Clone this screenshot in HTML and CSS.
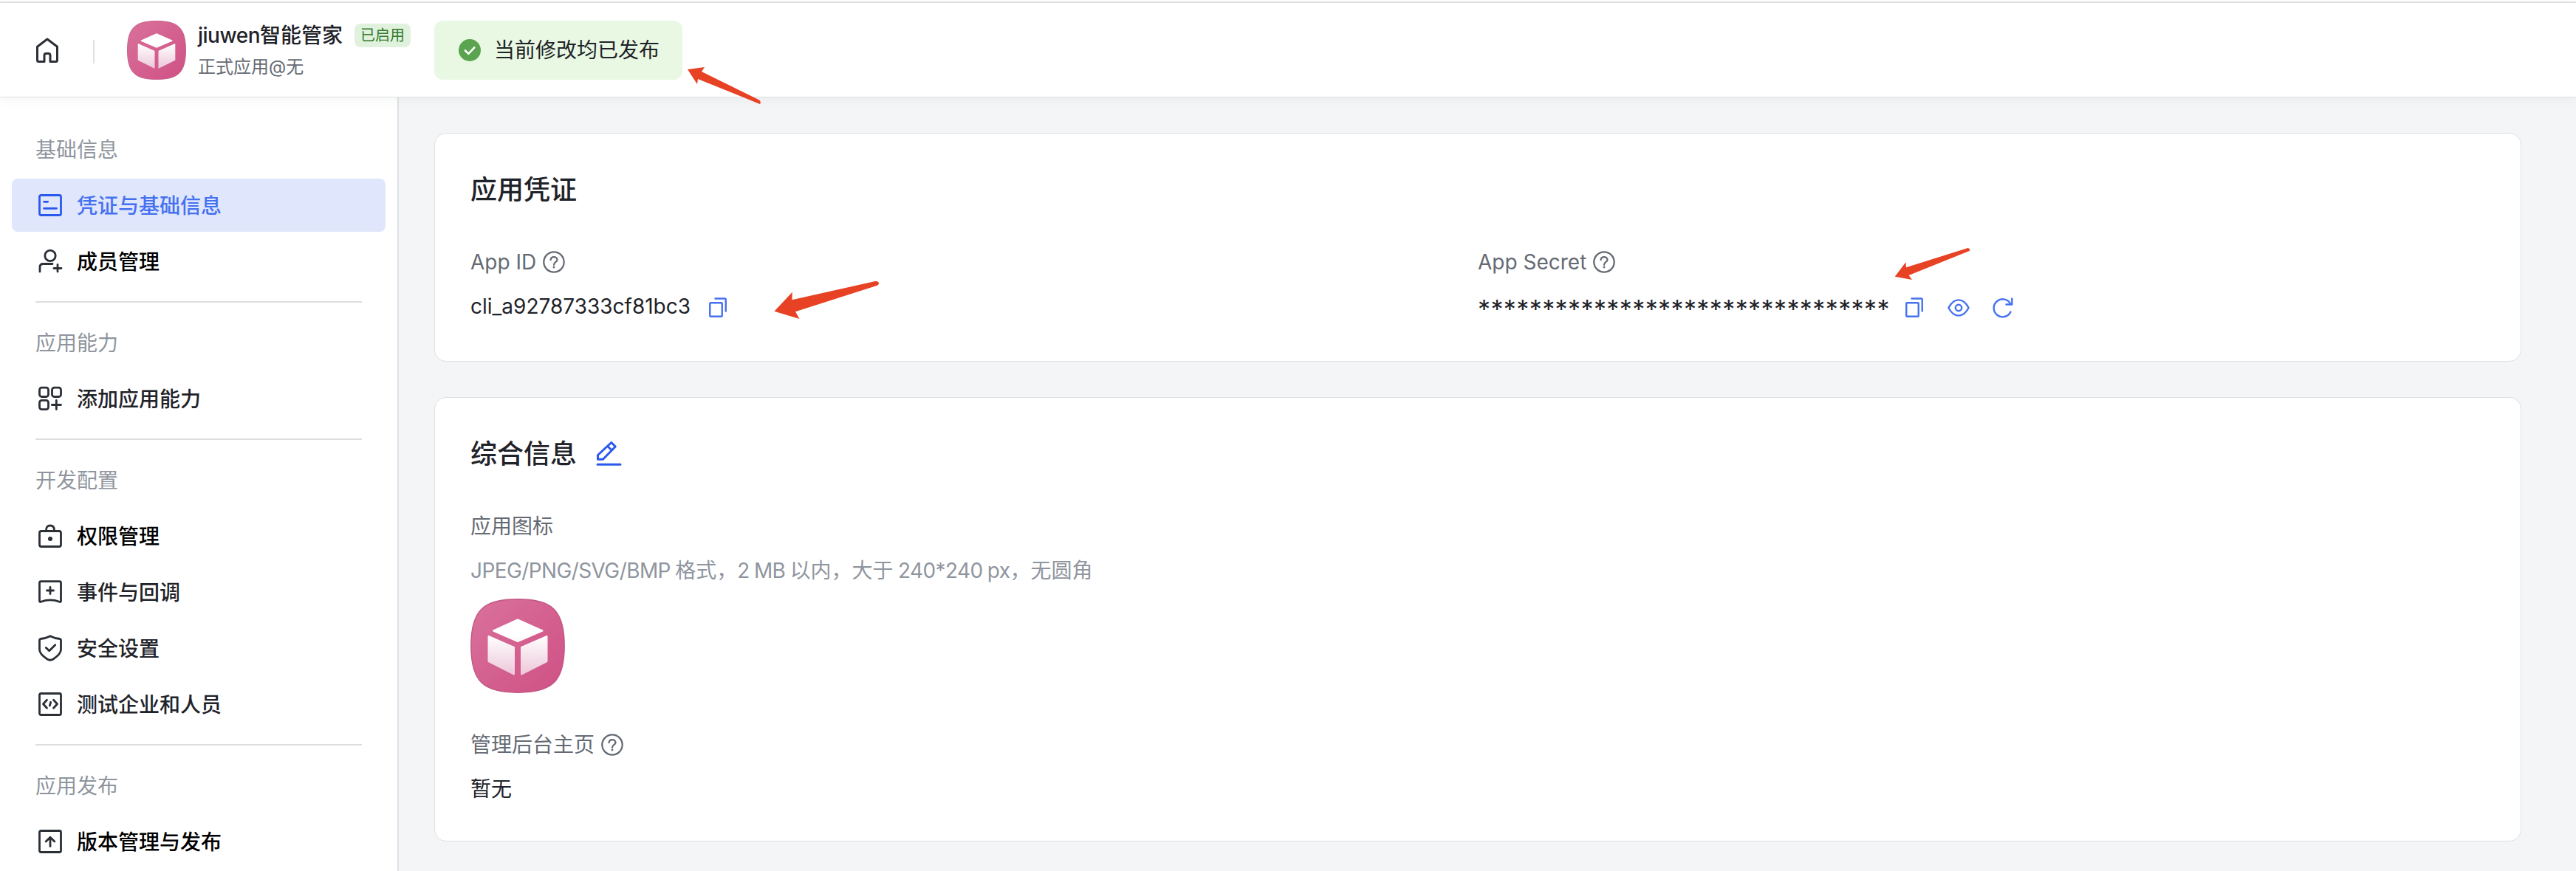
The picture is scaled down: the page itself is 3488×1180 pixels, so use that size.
FILE: index.html
```html
<!DOCTYPE html>
<html lang="zh-CN">
<head>
    <meta charset="UTF-8">
    <meta name="viewport" content="width=device-width, initial-scale=1.0">
    <title>jiuwen智能管家 - 凭证与基础信息</title>
    <link rel="stylesheet" href="styles.css">
</head>
<body>
    <!-- Shared icons -->
    <svg class="sprite" width="0" height="0" aria-hidden="true">
        <defs>
            <linearGradient id="logo-bg" x1="0" y1="0" x2="1" y2="1">
                <stop offset="0" stop-color="#d9729b"/>
                <stop offset="1" stop-color="#cf5085"/>
            </linearGradient>
            <linearGradient id="logo-cube" gradientUnits="userSpaceOnUse" x1="0" y1="50" x2="0" y2="104">
                <stop offset="0" stop-color="#fff"/>
                <stop offset="1" stop-color="#ecc6d8"/>
            </linearGradient>
        </defs>
        <symbol id="icon-app" viewBox="0 0 128 128">
            <path d="M64 .8C109 .8 127.2 14 127.2 64S109 127.2 64 127.2.8 114 .8 64 19 .8 64 .8z" fill="url(#logo-bg)" stroke="#c25884" stroke-width="1.4"/>
            <g fill="url(#logo-cube)" stroke="url(#logo-cube)" stroke-width="2" stroke-linejoin="round">
                <path d="M64 28.500L97.500 43.500 64 58 31 43.500z"/>
                <path d="M24.500 51L59 66V102.500L24.500 85z"/>
                <path d="M103.500 51L69 66V102.500L103.500 85z"/>
            </g>
        </symbol>
        <symbol id="icon-help" viewBox="0 0 30 30">
            <circle cx="15" cy="15" r="13.700"/>
            <path d="M10.600 12C10.900 9.500 12.600 8.100 15 8.100S19.500 9.700 19.500 12C19.500 15 15 15 15 18.800"/>
            <circle cx="15" cy="22" r="1.400" fill="currentColor" stroke="none"/>
        </symbol>
        <symbol id="icon-copy" viewBox="0 0 24 28">
            <rect x="1.250" y="7.250" width="16.500" height="18.500" rx="1"/>
            <path d="M8.500 1.500H21.700Q22.750 1.500 22.750 2.500V18.500"/>
        </symbol>
    </svg>

    <header class="header">
        <svg class="home" viewBox="0 0 36 36"><path d="M4.500 13.200L18 3 31.500 13.200V31.500Q31.500 33.500 29.500 33.500H22V25Q22 22.500 19.500 22.500H16.500Q14 22.500 14 25V33.500H6.500Q4.500 33.500 4.500 31.500z"/></svg>
        <span class="header-divider"></span>
        <svg class="header-logo"><use href="#icon-app"/></svg>
        <div class="app-info">
            <div class="app-name">
                <span><span class="latin">jiuwen</span>智能管家</span>
                <span class="tag">已启用</span>
            </div>
            <div class="app-type">正式应用@无</div>
        </div>
        <div class="publish-status">
            <svg class="status-icon" viewBox="0 0 30 30"><circle cx="15" cy="15" r="15"/><path d="M9 15.500L13.300 19.800 21.300 11.300"/></svg>
            <span>当前修改均已发布</span>
        </div>
    </header>

    <div class="layout">
        <nav class="sidebar">
            <div class="nav-group">
                <div class="nav-title">基础信息</div>
                <a class="nav-item active">
                    <svg viewBox="0 0 36 36"><rect x="3.500" y="4.500" width="29" height="27" rx="2"/><path d="M9.500 13.300H14.700M9.500 22.300H26.500"/></svg>
                    <span>凭证与基础信息</span>
                </a>
                <a class="nav-item strong">
                    <svg viewBox="0 0 36 36"><circle cx="18" cy="10.400" r="7.200"/><path d="M4 32V26Q4 21.500 8.500 21.500H21M28 22.500V32M23 27.500H33"/></svg>
                    <span>成员管理</span>
                </a>
            </div>
            <div class="nav-group">
                <div class="nav-title">应用能力</div>
                <a class="nav-item">
                    <svg viewBox="0 0 36 36"><rect x="3.500" y="3.200" width="12" height="12.300" rx="3"/><rect x="20.500" y="3.200" width="12" height="12.300" rx="3"/><rect x="3.500" y="20.300" width="12" height="12.300" rx="3"/><path d="M26.300 20.500V32.500M20.300 26.500H32.500"/></svg>
                    <span>添加应用能力</span>
                </a>
            </div>
            <div class="nav-group">
                <div class="nav-title">开发配置</div>
                <a class="nav-item strong">
                    <svg viewBox="0 0 36 36"><rect x="3.500" y="11.500" width="29" height="21" rx="2.500"/><path d="M12.500 10.500Q12.500 4 18 4T23.500 10.500"/><circle class="dot" cx="18" cy="22" r="3"/></svg>
                    <span>权限管理</span>
                </a>
                <a class="nav-item">
                    <svg viewBox="0 0 36 36"><path d="M5.500 3.700H30.500Q32.500 3.700 32.500 5.700V30.200Q32.500 32 30.500 31.300Q18 26.500 5.500 31.300Q3.500 32 3.500 30.200V5.700Q3.500 3.700 5.500 3.700zM18 11.500V20.500M13.500 16H22.500"/></svg>
                    <span>事件与回调</span>
                </a>
                <a class="nav-item">
                    <svg viewBox="0 0 36 36"><path d="M18 1.700Q24 4.800 31 5.500Q32.500 5.800 32.500 7.500V20Q32.500 26 22 33Q18 35.500 14 33Q3.500 26 3.500 20V7.500Q3.500 5.800 5 5.500Q12 4.800 18 1.700zM12.300 17.500L16.700 21.700 24.700 13.700"/></svg>
                    <span>安全设置</span>
                </a>
                <a class="nav-item">
                    <svg viewBox="0 0 36 36"><rect x="3.500" y="3.500" width="29" height="29" rx="2"/><path d="M13.500 12.200L8.500 17.800 13.500 23.300M22.500 12.200L27.500 17.800 22.500 23.300M18.700 15.300L17.300 20"/></svg>
                    <span>测试企业和人员</span>
                </a>
            </div>
            <div class="nav-group">
                <div class="nav-title">应用发布</div>
                <a class="nav-item strong">
                    <svg viewBox="0 0 36 36"><rect x="3.500" y="3.500" width="29" height="29" rx="2"/><path d="M18 12.500V24.700M12.200 18L18 12.300 23.800 18"/></svg>
                    <span>版本管理与发布</span>
                </a>
            </div>
        </nav>

        <main class="content">
            <section class="card credentials">
                <h2>应用凭证</h2>
                <div class="fields">
                    <div>
                        <div class="label">App ID <svg class="help"><use href="#icon-help"/></svg></div>
                        <div class="value">
                            <span class="app-id">cli_a92787333cf81bc3</span>
                            <svg class="copy"><use href="#icon-copy"/></svg>
                        </div>
                    </div>
                    <div>
                        <div class="label">App Secret <svg class="help"><use href="#icon-help"/></svg></div>
                        <div class="value">
                            <span class="secret">********************************</span>
                            <svg class="copy"><use href="#icon-copy"/></svg>
                            <svg class="eye" viewBox="0 0 30 24"><path d="M1.400 12Q7 1.400 15 1.400T28.600 12Q23 22.600 15 22.600T1.400 12z"/><circle cx="15" cy="12" r="4.200"/></svg>
                            <svg class="refresh" viewBox="0 0 28 28"><path d="M24.500 19.500A12 12 0 1 1 24.500 9.200M26.300 1.500V9.500H18.500"/></svg>
                        </div>
                    </div>
                </div>
            </section>

            <section class="card general">
                <h2>综合信息 <svg class="edit" viewBox="0 0 36 36"><path d="M20.800 2.500L26.300 8 9.500 25.200H2.500V19.500zM15.700 7.500L21 12.800M2 32.300H33"/></svg></h2>
                <div class="label">应用图标</div>
                <p class="hint">JPEG/PNG/SVG/BMP <span class="cjk">格式，</span>2 MB <span class="cjk">以内，大于</span> 240*240 px<span class="cjk">，无圆角</span></p>
                <svg class="app-logo"><use href="#icon-app"/></svg>
                <div class="label">管理后台主页 <svg class="help"><use href="#icon-help"/></svg></div>
                <div class="value">暂无</div>
            </section>
        </main>
    </div>

    <!-- Red pointer arrows lying over the page -->
    <svg class="arrows" viewBox="0 0 3488 1180">
        <path d="M931 94L954 91 950 97 1028 135.500Q1031 138 1029 141L945 107 944 114z"/>
        <path d="M1048.400 421.700L1072.800 395.700 1072.400 406.300 1185 381Q1190 380.500 1190 384 1190 386 1187 387L1077 422.300 1082.500 432z"/>
        <path d="M2565.700 374.700L2580.500 355.300 2581 362.300 2664.500 336Q2668 337 2667 339.700L2584.600 373 2589 379z"/>
    </svg>
</body>
</html>
```

FILE: styles.css
```css
* {
    box-sizing: border-box;
}
body {
    margin: 0;
    height: 1180px;
    overflow: hidden;
    display: flex;
    flex-direction: column;
    font-family: Inter, "Noto Sans CJK SC", sans-serif;
    font-size: 28px;
    line-height: 44px;
    color: #1f2329;
    background: #fff;
}
svg {
    flex: none;
    fill: none;
    stroke: currentColor;
    stroke-linecap: round;
    stroke-linejoin: round;
}
.sprite {
    position: absolute;
}

/* Header */
.header {
    position: relative;
    z-index: 1;
    display: flex;
    align-items: center;
    flex: none;
    height: 130px;
    margin-top: 2px;
    padding: 0 46px 0 46px;
    border-top: 2px solid #dee0e3;
    border-bottom: 1px solid #dee0e3;
    background: #fff;
    box-shadow: 0 4px 16px rgba(31, 35, 41, 0.04);
}
.home {
    width: 36px;
    height: 36px;
    stroke: #2b2f36;
    stroke-width: 3;
}
.header-divider {
    width: 2px;
    height: 32px;
    margin: 4px 44px 0;
    background: #dee0e3;
}
.header-logo {
    width: 80px;
    height: 80px;
}
.app-info {
    width: 320px;
    margin-left: 16px;
}
.app-name {
    display: flex;
    align-items: center;
    gap: 16px;
    height: 46px;
    font-weight: 500;
    white-space: nowrap;
}
.latin {
    letter-spacing: -0.5px;
}
.tag {
    height: 32px;
    padding: 0 8px;
    border-radius: 8px;
    font-size: 20px;
    font-weight: 400;
    line-height: 32px;
    color: #357a2c;
    background: #e0f2de;
}
.app-type {
    font-size: 24px;
    line-height: 39px;
    color: #646a73;
}
.publish-status {
    display: flex;
    align-items: center;
    gap: 18px;
    height: 80px;
    width: 336px;
    padding-left: 33px;
    border-radius: 12px;
    white-space: nowrap;
    background: #e8f8e3;
}
.status-icon {
    width: 30px;
    height: 30px;
}
.status-icon circle {
    fill: #5ba44f;
    stroke: none;
}
.status-icon path {
    stroke: #fff;
    stroke-width: 2.6;
}

/* Sidebar */
.layout {
    display: flex;
    flex: 1;
    min-height: 0;
}
.sidebar {
    flex: none;
    width: 540px;
    padding: 16px 16px 0;
    border-right: 2px solid #dee0e3;
    overflow: hidden;
}
.nav-group + .nav-group::before {
    content: "";
    display: block;
    height: 2px;
    margin: 18px 32px 0;
    background: #dcdedf;
}
.nav-title {
    padding: 33px 32px 17px;
    color: #8f959e;
}
.nav-item {
    display: flex;
    align-items: center;
    gap: 18px;
    width: 506px;
    height: 72px;
    padding-left: 34px;
    border-radius: 8px;
    font-weight: 500;
}
.nav-item + .nav-item {
    margin-top: 4px;
}
.nav-item span {
    padding-top: 2px;
}
.nav-item svg {
    width: 36px;
    height: 36px;
    stroke: #2b2f36;
    stroke-width: 2.8;
}
.nav-item .dot {
    fill: #2b2f36;
    stroke: none;
}
.nav-item.strong {
    color: #000;
}
.nav-item.active {
    color: #4571f0;
    background: #e0e6fc;
}
.nav-item.active svg {
    stroke: #2b59ee;
}

/* Content */
.content {
    flex: 1;
    padding: 48px 74px 0 48px;
    background: #f4f5f7;
}
.card {
    padding: 48px;
    border: 1px solid #dee0e3;
    border-radius: 16px;
    background: #fff;
}
.card + .card {
    margin-top: 48px;
}
.card h2 {
    display: flex;
    align-items: center;
    gap: 26px;
    height: 56px;
    margin: 0;
    font-size: 36px;
    font-weight: 500;
}
.credentials {
    height: 310px;
}
.general {
    height: 602px;
}
.fields {
    display: grid;
    grid-template-columns: 1fr 1fr;
    margin-top: 48px;
}
.label,
.value {
    display: flex;
    align-items: center;
    height: 44px;
}
.label {
    gap: 9px;
    color: #646a73;
}
.value {
    margin-top: 16px;
}
.help {
    width: 30px;
    height: 30px;
    stroke-width: 2.3;
}
.secret {
    width: 554px;
    padding-top: 8px;
    font-size: 34px;
    letter-spacing: 0.4px;
}
.copy,
.eye,
.refresh {
    margin-top: 3px;
    stroke: #4571f0;
    stroke-width: 2.4;
}
.copy {
    width: 24px;
    height: 28px;
    margin-left: 25px;
}
.eye {
    width: 30px;
    height: 24px;
    margin-left: 33px;
}
.refresh {
    width: 28px;
    height: 28px;
    margin-left: 31px;
}
.edit {
    width: 36px;
    height: 36px;
    stroke: #2b59ee;
    stroke-width: 3;
}
.general .label {
    margin-top: 48px;
}
.hint {
    margin: 16px 0;
    letter-spacing: -0.6px;
    word-spacing: -1px;
    color: #8f959e;
}
.hint .cjk {
    letter-spacing: 0;
}
.app-logo {
    display: block;
    width: 128px;
    height: 128px;
}

.arrows {
    position: absolute;
    z-index: 2;
    top: 0;
    left: 0;
    width: 3488px;
    height: 1180px;
    fill: #e84225;
    stroke: none;
    pointer-events: none;
}
```
